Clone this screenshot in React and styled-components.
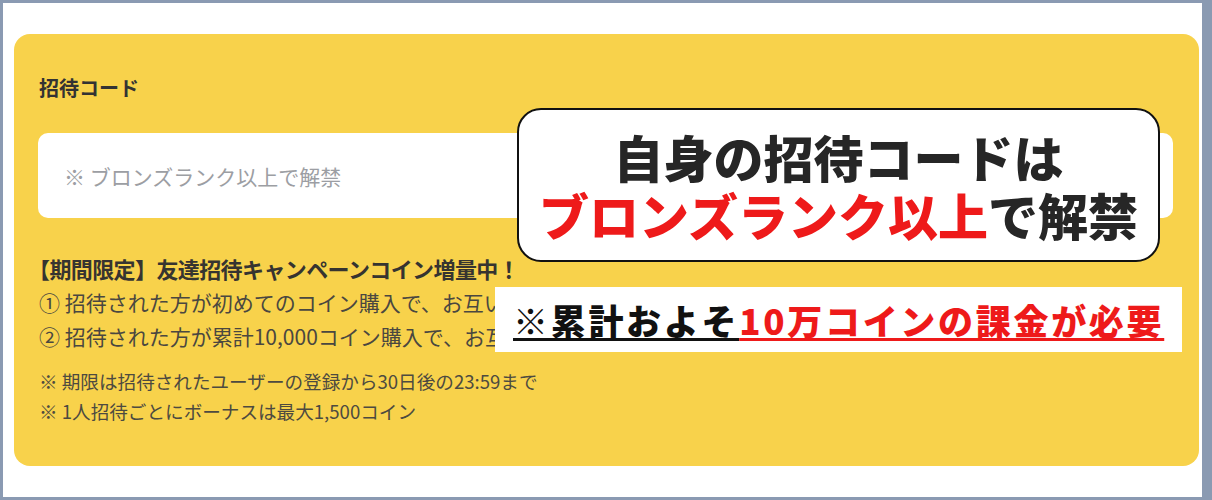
import React from "react";
import styled, { createGlobalStyle } from "styled-components";

const Global = createGlobalStyle`
  html, body { margin: 0; padding: 0; background: #ffffff; }
  body { font-family: "Noto Sans CJK JP", "Noto Sans", sans-serif; }
  * { box-sizing: border-box; }
`;

const Frame = styled.div`
  position: relative;
  width: 1212px;
  height: 500px;
  background: #ffffff;
  border: 3px solid #8a9ab2;
  border-right-width: 10px;
  overflow: hidden;
`;

const Card = styled.section`
  margin: 31px 3px 0 11px;
  height: 432px;
  background: #f8d24b;
  border-radius: 16px;
  padding: 40px 26px 0 24px;
  display: flex;
  flex-direction: column;
`;

const Label = styled.div`
  font-size: 20px;
  line-height: 28px;
  font-weight: 700;
  color: #333333;
  padding-left: 1px;
`;

const Input = styled.div`
  margin-top: 31px;
  height: 85px;
  background: #ffffff;
  border-radius: 10px;
  display: flex;
  align-items: center;
  padding-left: 26px;
  font-size: 21px;
  color: #9c9ea3;
`;

const Heading = styled.div`
  margin-top: 35px;
  font-size: 22px;
  line-height: 30px;
  font-weight: 700;
  letter-spacing: -0.6px;
  color: #363430;
  margin-left: -10px;
  white-space: nowrap;
`;

const Lines = styled.div`
  margin-top: 2px;
  display: flex;
  flex-direction: column;
`;

const Line = styled.div`
  font-size: ${(p) => (p.$small ? "18.6px" : "21px")};
  line-height: ${(p) => (p.$small ? "30px" : "34px")};
  margin-top: ${(p) => p.$gap || 0}px;
  color: ${(p) => (p.$small ? "#4d4a40" : "#4a4740")};
  white-space: nowrap;
  padding-left: 1px;
`;

const Callout = styled.div`
  position: absolute;
  left: 514px;
  top: 105px;
  width: 643px;
  height: 154px;
  background: #ffffff;
  border: 2px solid #111111;
  border-radius: 24px;
  display: flex;
  flex-direction: column;
  align-items: center;
  justify-content: center;
  font-size: 50px;
  line-height: 58px;
  font-weight: 900;
  color: #262626;
`;

const Banner = styled.div`
  position: absolute;
  left: 492px;
  top: 284px;
  width: 687px;
  height: 65px;
  background: #ffffff;
  display: flex;
  align-items: center;
  padding-left: 18px;
  font-size: 35px;
  line-height: 40px;
  font-weight: 900;
  letter-spacing: 2.7px;
  white-space: nowrap;
`;

const Mark = styled.span`
  color: ${(p) => (p.$red ? "#ee1a1a" : "inherit")};
`;

const Under = styled.span`
  color: ${(p) => (p.$red ? "#ee1a1a" : "#111111")};
  text-decoration: underline;
  text-decoration-thickness: 3px;
  text-underline-offset: 3px;
`;

export default function App() {
  return (
    <>
      <Global />
      <Frame>
        <Card>
          <Label>招待コード</Label>
          <Input>※ ブロンズランク以上で解禁</Input>
          <Heading>【期間限定】友達招待キャンペーンコイン増量中！</Heading>
          <Lines>
            <Line>① 招待された方が初めてのコイン購入で、お互いに500コインプレゼント</Line>
            <Line>② 招待された方が累計10,000コイン購入で、お互いに1,000コイン</Line>
            <Line $small $gap={13}>※ 期限は招待されたユーザーの登録から30日後の23:59まで</Line>
            <Line $small>※ 1人招待ごとにボーナスは最大1,500コイン</Line>
          </Lines>
        </Card>
        <Callout>
          <div>自身の招待コードは</div>
          <div>
            <Mark $red>ブロンズランク以上</Mark>で解禁
          </div>
        </Callout>
        <Banner>
          <Under>※累計およそ</Under>
          <Under $red>10万コインの課金が必要</Under>
        </Banner>
      </Frame>
    </>
  );
}
